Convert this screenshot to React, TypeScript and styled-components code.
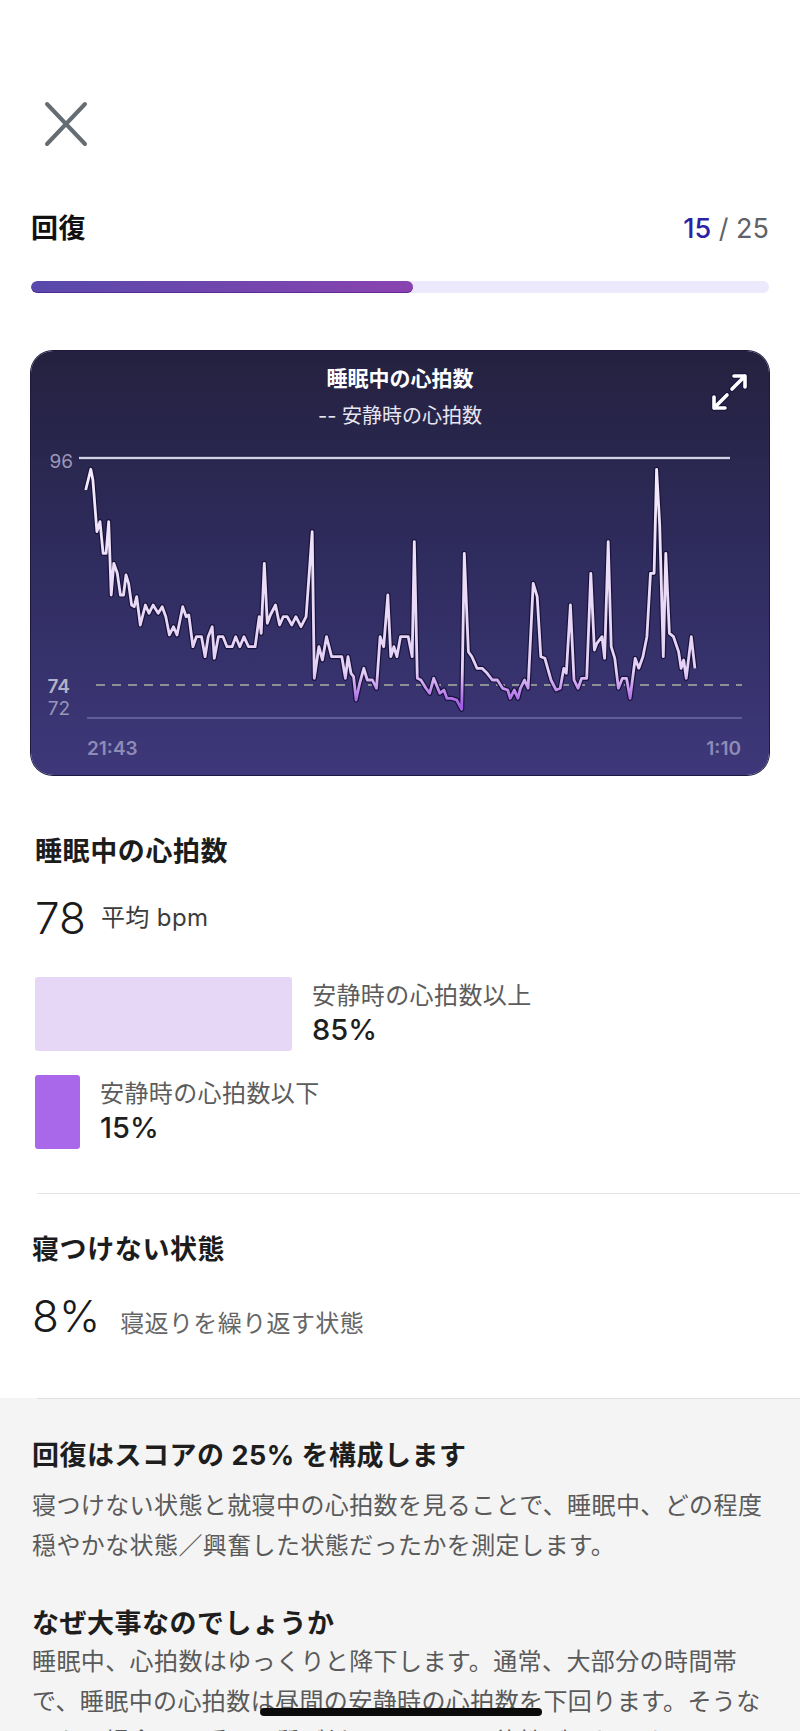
import React from 'react';
import styled, { createGlobalStyle } from 'styled-components';

const GlobalStyle = createGlobalStyle`
  html, body {
    margin: 0;
    padding: 0;
    background: #fff;
  }
  body {
    font-family: Inter, 'Noto Sans CJK JP', sans-serif;
    color: #1f1f1f;
    -webkit-font-smoothing: antialiased;
  }
`;

// heart-rate trace, sampled on a 1.96x / 3x grid of the plot
const TRACE: [number, number][] = [
	[168, 450], [178, 388], [182, 420], [190, 575], [196, 545], [202, 640], [208, 640], [213, 545],
	[218, 765], [223, 670], [230, 700], [236, 765], [242, 765], [247, 705], [252, 730], [258, 795],
	[263, 800], [268, 770], [275, 855], [285, 795], [292, 820], [300, 795], [310, 820], [318, 800],
	[325, 830], [332, 885], [340, 860], [347, 885], [358, 800], [365, 830], [370, 825], [378, 920],
	[385, 890], [395, 890], [402, 950], [408, 890], [416, 860], [420, 955], [428, 890], [437, 890],
	[445, 920], [455, 920], [462, 890], [470, 920], [478, 890], [487, 920], [500, 920], [508, 830],
	[512, 880], [518, 670], [524, 850], [530, 825], [540, 795], [548, 855], [555, 830], [563, 830],
	[572, 855], [580, 830], [590, 860], [600, 830], [612, 575], [616, 1015], [625, 920], [632, 960],
	[640, 890], [650, 950], [660, 950], [670, 950], [677, 1015], [682, 950], [688, 1000], [693, 1010],
	[698, 1080], [705, 1030], [713, 985], [720, 1020], [730, 1020], [738, 1045], [745, 890], [752, 920],
	[760, 765], [766, 950], [772, 920], [778, 950], [785, 890], [800, 890], [808, 950], [812, 605],
	[818, 1015], [825, 1020], [835, 1045], [842, 1060], [850, 1015], [857, 1040], [862, 1060], [870, 1050],
	[876, 1075], [885, 1075], [895, 1080], [905, 1108], [910, 640], [918, 935], [925, 950], [935, 985],
	[945, 985], [955, 1000], [965, 1020], [975, 1020], [985, 1045], [995, 1050], [1000, 1075], [1008, 1050],
	[1015, 1075], [1020, 1045], [1028, 1020], [1035, 1045], [1045, 730], [1053, 770], [1060, 950], [1068, 955],
	[1080, 1020], [1090, 1050], [1098, 1045], [1105, 985], [1110, 1000], [1118, 795], [1125, 1020], [1133, 1045],
	[1140, 1015], [1150, 1015], [1158, 700], [1165, 930], [1170, 910], [1180, 890], [1185, 955], [1192, 605],
	[1198, 920], [1205, 955], [1212, 1045], [1220, 1015], [1228, 1015], [1235, 1075], [1245, 955], [1252, 985],
	[1260, 950], [1268, 890], [1275, 700], [1282, 700], [1287, 388], [1293, 555], [1300, 950], [1305, 640],
	[1312, 880], [1320, 890], [1330, 935], [1335, 985], [1340, 960], [1345, 1015], [1355, 890], [1362, 985],
];

const tracePoints = TRACE.map(([x, y]) => `${(x / 1.96 - 31).toFixed(1)},${(y / 3 - 101).toFixed(1)}`).join(' ');

const Screen = styled.div`
	position: relative;
	width: 800px;
	height: 1731px;
	overflow: hidden;
	background: #fff;
`;

const Content = styled.div`
	padding: 0 31px;
`;

const CloseButton = styled.button`
	display: block;
	margin: 101px 0 0 13px;
	padding: 0;
	width: 44px;
	height: 46px;
	border: 0;
	background: none;
`;

const ScoreRow = styled.div`
	margin-top: 66px;
	display: flex;
	align-items: center;
	justify-content: space-between;
	height: 32px;
`;

const ScoreTitle = styled.h1`
	margin: 0;
	font-size: 27px;
	line-height: 32px;
	font-weight: 700;
	letter-spacing: 0.5px;
	color: #111;
`;

const ScoreValue = styled.div`
	font-size: 27px;
	line-height: 32px;
	color: #5f6368;
`;

const ScoreNow = styled.span`
	color: #2c22a3;
	font-weight: 500;
`;

const Track = styled.div`
	margin-top: 36px;
	height: 12px;
	border-radius: 6px;
	background: #ebe9fb;
	overflow: hidden;
`;

const TrackFill = styled.div<{ $value: number }>`
	width: ${p => p.$value * 100}%;
	height: 100%;
	border-radius: 6px;
	background: linear-gradient(90deg, #5849ab 0%, #7a45ae 70%, #8a43b0 100%);
	box-shadow: inset 0 -1px 0 rgba(80, 20, 140, 0.6);
`;

const ChartCard = styled.section`
	margin-top: 58px;
	height: 424px;
	border-radius: 22px;
	overflow: hidden;
	background: linear-gradient(180deg, #24213f 0%, #2e2b5c 45%, #3e387a 100%);
	box-shadow: 0 0 0 1px #1c1840;
`;

const ChartHeader = styled.header`
	display: grid;
	grid-template-columns: 1fr auto 1fr;
	padding: 14px 19px 0;
`;

const ChartTitles = styled.div`
	grid-column: 2;
	text-align: center;
`;

const ChartTitle = styled.div`
	font-size: 21px;
	line-height: 28px;
	font-weight: 700;
	color: #fff;
`;

const ChartLegend = styled.div`
	margin-top: 9px;
	font-size: 20px;
	line-height: 28px;
	color: #e8e6f2;
`;

const ExpandButton = styled.button`
	justify-self: end;
	margin-top: 7px;
	padding: 0;
	width: 41px;
	height: 40px;
	border: 0;
	background: none;
`;

const PlotSvg = styled.svg`
	display: block;
	margin-top: 11px;
	font-family: Inter, 'Liberation Sans', sans-serif;
`;

const AxisLabel = styled.text<{ $strong?: boolean }>`
	font-size: 19px;
	fill: ${p => (p.$strong ? '#b3b1c9' : '#9a97b8')};
	font-weight: ${p => (p.$strong ? 600 : 400)};
`;

const TimeLabel = styled.text`
	font-size: 19px;
	font-weight: 600;
	fill: #8f8bb7;
`;

const Section = styled.section<{ $inset: number }>`
	padding-left: ${p => p.$inset}px;
`;

const SectionTitle = styled.h2<{ $top: number }>`
	margin: ${p => p.$top}px 0 0;
	font-size: 27px;
	line-height: 36px;
	font-weight: 700;
	letter-spacing: 0.6px;
	color: #1c1c1c;
`;

const StatRow = styled.div<{ $align: string; $gap: number }>`
	margin-top: 23px;
	display: flex;
	align-items: ${p => p.$align};
	gap: ${p => p.$gap}px;
	height: 50px;
`;

const BigNumber = styled.span`
	font-size: 44px;
	line-height: 50px;
	font-weight: 300;
	color: #1a1a1a;
`;

const StatCaption = styled.span<{ $muted?: boolean }>`
	font-size: 24px;
	letter-spacing: 0.4px;
	line-height: 30px;
	color: ${p => (p.$muted ? '#666' : '#3c3c3c')};
`;

const BarList = styled.div`
	margin-top: 34px;
	display: flex;
	flex-direction: column;
	gap: 24px;
`;

const BarRow = styled.div`
	display: flex;
	align-items: flex-start;
	gap: 20px;
`;

const BarBlock = styled.div<{ $color: string }>`
	flex: none;
	height: 74px;
	border-radius: 3px;
	background: ${p => p.$color};
`;

const BarText = styled.div`
	padding-top: 3px;
`;

const BarLabel = styled.div`
	font-size: 24px;
	letter-spacing: 0.4px;
	line-height: 32px;
	color: #5c5c5c;
`;

const BarValue = styled.div`
	font-size: 29px;
	line-height: 36px;
	font-weight: 500;
	color: #1e1e1e;
`;

const Divider = styled.hr<{ $top: number }>`
	margin: ${p => p.$top}px -31px 0 6px;
	border: 0;
	height: 1px;
	background: #e4e4e4;
`;

const InfoSection = styled.section`
	margin-top: 57px;
	background: #f4f4f4;
	padding-bottom: 40px;
`;

const InfoRule = styled.hr`
	margin: 0 0 0 37px;
	border: 0;
	height: 1px;
	background: #e2e2e2;
`;

const InfoBody = styled.div`
	padding: 39px 0 0 32px;
	width: 740px;
`;

const InfoTitle = styled.h3<{ $top: number; $bottom: number }>`
	margin: ${p => p.$top}px 0 ${p => p.$bottom}px;
	font-size: 27px;
	line-height: 36px;
	font-weight: 700;
	letter-spacing: 0.5px;
	color: #1e1e1e;
`;

const InfoText = styled.p`
	margin: 0;
	font-size: 24px;
	letter-spacing: 0.4px;
	line-height: 40px;
	color: #5a5a5a;
`;

const HomeIndicator = styled.div`
	position: absolute;
	left: 260px;
	top: 1708px;
	width: 282px;
	height: 8px;
	border-radius: 4px;
	background: #0b0b0b;
`;

const BAR_SCALE = 3.02;

const zones = [
	{ label: '安静時の心拍数以上', pct: 85, color: '#e7d7f7' },
	{ label: '安静時の心拍数以下', pct: 15, color: '#a967e9' },
];

const HeartRatePlot = () => (
	<PlotSvg width={738} height={334} viewBox="0 0 738 334">
		<defs>
			<linearGradient id="hrStroke" gradientUnits="userSpaceOnUse" x1="0" y1="0" x2="0" y2="334">
				<stop offset="0" stopColor="#f7eefc" />
				<stop offset="0.69" stopColor="#e4d0f4" />
				<stop offset="0.74" stopColor="#c795ef" />
				<stop offset="0.79" stopColor="#a35ee6" />
			</linearGradient>
		</defs>
		<line x1={48} y1={17} x2={699} y2={17} stroke="#15123a" strokeWidth={4.5} />
		<line x1={48} y1={17} x2={699} y2={17} stroke="#d2d0e4" strokeWidth={2.4} />
		<line x1={65} y1={244} x2={711} y2={244} stroke="#8d9094" strokeWidth={2} strokeDasharray="9 7" />
		<line x1={56} y1={277} x2={711} y2={277} stroke="#6f6aa3" strokeWidth={1.5} />
		<polyline points={tracePoints} fill="none" stroke="#17133a" strokeWidth={5.2} strokeLinejoin="round" />
		<polyline points={tracePoints} fill="none" stroke="url(#hrStroke)" strokeWidth={2.8} strokeLinejoin="round" />
		<AxisLabel x={42} y={20} textAnchor="end" dominantBaseline="central">96</AxisLabel>
		<AxisLabel $strong x={39} y={245} textAnchor="end" dominantBaseline="central">74</AxisLabel>
		<AxisLabel x={39} y={267} textAnchor="end" dominantBaseline="central">72</AxisLabel>
		<TimeLabel x={56} y={307} dominantBaseline="central">21:43</TimeLabel>
		<TimeLabel x={710} y={307} textAnchor="end" dominantBaseline="central">1:10</TimeLabel>
	</PlotSvg>
);

const App: React.FC = () => {
	return (
		<Screen>
			<GlobalStyle />
			<Content>
				<CloseButton aria-label="閉じる">
					<svg width="44" height="46" viewBox="0 0 44 46">
						<path d="M3 3 L41 43 M41 3 L3 43" stroke="#656d73" strokeWidth={4} strokeLinecap="round" fill="none" />
					</svg>
				</CloseButton>

				<ScoreRow>
					<ScoreTitle>回復</ScoreTitle>
					<ScoreValue>
						<ScoreNow>15</ScoreNow> / 25
					</ScoreValue>
				</ScoreRow>
				<Track>
					<TrackFill $value={0.518} />
				</Track>

				<ChartCard>
					<ChartHeader>
						<ChartTitles>
							<ChartTitle>睡眠中の心拍数</ChartTitle>
							<ChartLegend>-- 安静時の心拍数</ChartLegend>
						</ChartTitles>
						<ExpandButton aria-label="拡大">
							<svg width="41" height="40" viewBox="0 0 41 40">
								<g stroke="#1a163f" strokeWidth={6} strokeLinecap="round" strokeLinejoin="round" fill="none">
									<path d="M23 17 L36 4 M25 4 H36 V15 M18 23 L5 36 M5 25 V36 H16" />
								</g>
								<g stroke="#fff" strokeWidth={3.6} strokeLinecap="round" strokeLinejoin="round" fill="none">
									<path d="M23 17 L36 4 M25 4 H36 V15 M18 23 L5 36 M5 25 V36 H16" />
								</g>
							</svg>
						</ExpandButton>
					</ChartHeader>
					<HeartRatePlot />
				</ChartCard>

				<Section $inset={4}>
					<SectionTitle $top={59}>睡眠中の心拍数</SectionTitle>
					<StatRow $align="center" $gap={15}>
						<BigNumber>78</BigNumber>
						<StatCaption>平均 bpm</StatCaption>
					</StatRow>
					<BarList>
						{zones.map(z => (
							<BarRow key={z.label}>
								<BarBlock $color={z.color} style={{ width: Math.round(z.pct * BAR_SCALE) }} />
								<BarText>
									<BarLabel>{z.label}</BarLabel>
									<BarValue>{z.pct}%</BarValue>
								</BarText>
							</BarRow>
						))}
					</BarList>
				</Section>

				<Divider $top={44} />

				<Section $inset={1}>
					<SectionTitle $top={38}>寝つけない状態</SectionTitle>
					<StatRow $align="baseline" $gap={20}>
						<BigNumber>8%</BigNumber>
						<StatCaption $muted>寝返りを繰り返す状態</StatCaption>
					</StatRow>
				</Section>
			</Content>

			<InfoSection>
				<InfoRule />
				<InfoBody>
					<InfoTitle $top={0} $bottom={12}>回復はスコアの 25% を構成します</InfoTitle>
					<InfoText>
						寝つけない状態と就寝中の心拍数を見ることで、睡眠中、どの程度穏やかな状態／興奮した状態だったかを測定します。
					</InfoText>
					<InfoTitle $top={40} $bottom={0}>なぜ大事なのでしょうか</InfoTitle>
					<InfoText>
						睡眠中、心拍数はゆっくりと降下します。通常、大部分の時間帯で、睡眠中の心拍数は昼間の安静時の心拍数を下回ります。そうならない場合は、睡眠の質が低下している可能性があります。
					</InfoText>
				</InfoBody>
			</InfoSection>

			<HomeIndicator />
		</Screen>
	);
};

export default App;
